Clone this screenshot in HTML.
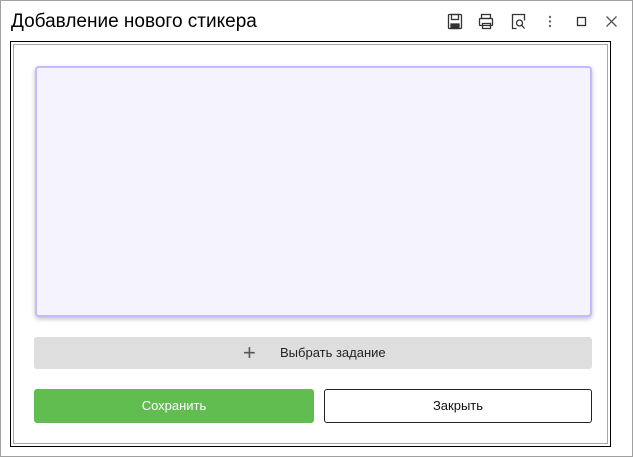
<!DOCTYPE html>
<html><head><meta charset="utf-8"><style>
*{box-sizing:border-box;margin:0;padding:0}
body{width:633px;height:457px;background:#fff;position:relative;overflow:hidden;font-family:"Liberation Sans",sans-serif}
.win{position:absolute;left:0;top:0;width:633px;height:457px;border:1px solid #a0a0a0}
.title{position:absolute;left:11px;top:11px;font-size:19px;color:#000}
.a{position:absolute}
.f1{left:10px;top:41px;width:601px;height:406px;border:1px solid #000}
.f2{left:13px;top:44px;width:595px;height:400px;border:1px solid #a8a8a8}
.ta{left:35px;top:66px;width:557px;height:251px;background:#f5f3fe;border:2px solid #c4baff;border-radius:4px;box-shadow:0 2px 5px rgba(0,0,0,.25)}
.sel{left:34px;top:337px;width:558px;height:32px;background:#dedede;border-radius:3px;font-size:13px;color:#222;line-height:32px}
.btn{top:389px;height:34px;border-radius:3px;font-size:13px;text-align:center;line-height:34px}
.save{left:34px;width:280px;background:#62bd51;color:#fff}
.close{left:324px;width:268px;border:1px solid #222;color:#111;line-height:32px}
</style></head><body>
<div class="win"></div>
<div class="title">Добавление нового стикера</div>
<svg class="a" style="left:440px;top:8px" width="190" height="28" viewBox="0 0 190 28" fill="none" stroke="#333" stroke-width="1.3">
<rect x="8.5" y="6.5" width="13" height="14" rx="1"/><rect x="11.5" y="6.5" width="7" height="5"/><rect x="11" y="16" width="8" height="4.5" fill="#333"/>
<rect x="41.5" y="6.5" width="9" height="4"/><rect x="39.5" y="10.5" width="13" height="7" rx="1"/><rect x="42.5" y="15.5" width="8" height="5"/>
<path d="M76.5 20.5h-4v-14h12v6"/><circle cx="79.5" cy="15" r="3"/><path d="M81.5 17l3 3.5"/>
<g fill="#666" stroke="none"><circle cx="110" cy="9" r="1.2"/><circle cx="110" cy="13.5" r="1.2"/><circle cx="110" cy="18" r="1.2"/></g>
<rect x="137.5" y="9.5" width="8" height="8"/>
<path d="M166.5 8.5l10 10M176.5 8.5l-10 10" stroke="#555"/>
</svg>
<div class="a f1"></div><div class="a f2"></div>
<div class="a ta"></div>
<div class="a sel"><span style="position:absolute;left:209px;top:0;font-size:22px;color:#555;font-weight:300">+</span><span style="position:absolute;left:246px">Выбрать задание</span></div>
<div class="a btn save">Сохранить</div>
<div class="a btn close">Закрыть</div>
</body></html>
